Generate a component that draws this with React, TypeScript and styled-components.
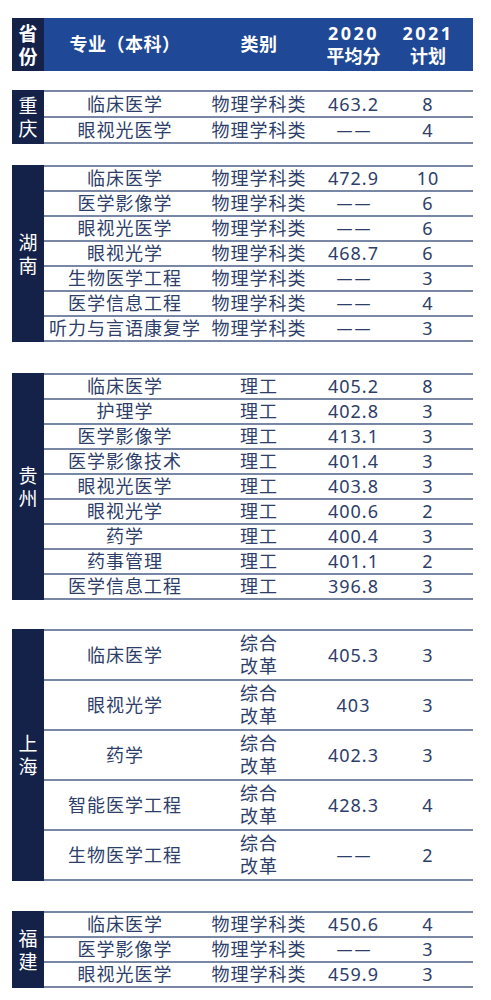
import React from "react";
import styled, { createGlobalStyle } from "styled-components";

const GlobalStyle = createGlobalStyle`
  html, body {
    margin: 0;
    padding: 0;
    background: #ffffff;
  }
  body {
    font-family: "Noto Sans", "Noto Sans CJK SC", sans-serif;
  }
`;

const NAVY = "#14224a";
const BLUE = "#1f4996";
const TEXT = "#2d3e69";
const LINE = "#7887a6";

const Page = styled.div`
  width: 461px;
  padding: 18px 18px 0 12px;
  display: flex;
  flex-direction: column;
`;

const Header = styled.div`
  display: flex;
  height: 53px;
  background: ${BLUE};
  color: #ffffff;
  font-weight: 700;
`;

const ProvinceCell = styled.div<{ $header?: boolean }>`
  width: 32px;
  flex: 0 0 32px;
  background: ${NAVY};
  color: #ffffff;
  display: flex;
  align-items: center;
  justify-content: center;
  font-family: "Noto Sans CJK SC", sans-serif;
  font-size: 19px;
  font-weight: ${(p) => (p.$header ? 700 : 400)};
`;

const ProvText = styled.span`
  writing-mode: vertical-rl;
  text-orientation: upright;
  letter-spacing: 4px;
  margin-bottom: -4px;
  line-height: 19px;
`;

const Cols = styled.div`
  flex: 1;
  display: grid;
  grid-template-columns: 162px 106px 83px 1fr;
`;

const HeadCell = styled.div<{ $pr?: number }>`
  display: flex;
  align-items: center;
  justify-content: center;
  padding-right: ${(p) => p.$pr ?? 0}px;
  font-family: "Noto Sans", "Noto Sans CJK SC", sans-serif;
  font-size: 18px;
  line-height: 21px;
  letter-spacing: 0.5px;
  text-align: center;
`;

const HeadStack = styled.div`
  text-align: center;
  line-height: 23px;
  letter-spacing: 0;
  margin-top: 1px;
  &::first-line {
    letter-spacing: 2.5px;
  }
`;

const Section = styled.section<{ $mt: number }>`
  display: flex;
  margin-top: ${(p) => p.$mt}px;
`;

const Rows = styled.div`
  flex: 1;
  display: flex;
  flex-direction: column;
  border-top: 2px solid ${LINE};
`;

const Row = styled.div<{ $h: number }>`
  box-sizing: border-box;
  height: ${(p) => p.$h}px;
  border-bottom: 2px solid ${LINE};
  display: grid;
  grid-template-columns: 162px 106px 83px 1fr;
  color: ${TEXT};
  font-size: 18px;
`;

const Cell = styled.div<{ $pr?: number }>`
  display: flex;
  flex-direction: column;
  align-items: center;
  justify-content: center;
  padding-right: ${(p) => p.$pr ?? 0}px;
  letter-spacing: 1px;
  white-space: nowrap;
  line-height: 23px;
`;

const Dash = styled.span`
  font-family: "Noto Sans", sans-serif;
  font-size: 16px;
  letter-spacing: 2px;
  margin-right: -2px;
`;

type R = [string, string, string | null, string];
type S = { prov: string; mt: number; h: number; rows: R[] };

const PHYS = "物理学科类";
const LG = "理工";
const ZH = "综合|改革";

const sections: S[] = [
  {
    prov: "重庆",
    mt: 19,
    h: 26,
    rows: [
      ["临床医学", PHYS, "463.2", "8"],
      ["眼视光医学", PHYS, null, "4"],
    ],
  },
  {
    prov: "湖南",
    mt: 21,
    h: 25,
    rows: [
      ["临床医学", PHYS, "472.9", "10"],
      ["医学影像学", PHYS, null, "6"],
      ["眼视光医学", PHYS, null, "6"],
      ["眼视光学", PHYS, "468.7", "6"],
      ["生物医学工程", PHYS, null, "3"],
      ["医学信息工程", PHYS, null, "4"],
      ["听力与言语康复学", PHYS, null, "3"],
    ],
  },
  {
    prov: "贵州",
    mt: 31,
    h: 25,
    rows: [
      ["临床医学", LG, "405.2", "8"],
      ["护理学", LG, "402.8", "3"],
      ["医学影像学", LG, "413.1", "3"],
      ["医学影像技术", LG, "401.4", "3"],
      ["眼视光医学", LG, "403.8", "3"],
      ["眼视光学", LG, "400.6", "2"],
      ["药学", LG, "400.4", "3"],
      ["药事管理", LG, "401.1", "2"],
      ["医学信息工程", LG, "396.8", "3"],
    ],
  },
  {
    prov: "上海",
    mt: 29,
    h: 50,
    rows: [
      ["临床医学", ZH, "405.3", "3"],
      ["眼视光学", ZH, "403", "3"],
      ["药学", ZH, "402.3", "3"],
      ["智能医学工程", ZH, "428.3", "4"],
      ["生物医学工程", ZH, null, "2"],
    ],
  },
  {
    prov: "福建",
    mt: 30,
    h: 25,
    rows: [
      ["临床医学", PHYS, "450.6", "4"],
      ["医学影像学", PHYS, null, "3"],
      ["眼视光医学", PHYS, "459.9", "3"],
    ],
  },
];

const Stack: React.FC<{ text: string }> = ({ text }) => (
  <>
    {text.split("|").map((t) => (
      <span key={t}>{t}</span>
    ))}
  </>
);

export default function App() {
  return (
    <>
      <GlobalStyle />
      <Page>
        <Header>
          <ProvinceCell $header>
            <ProvText>省份</ProvText>
          </ProvinceCell>
          <Cols>
            <HeadCell>专业（本科）</HeadCell>
            <HeadCell>类别</HeadCell>
            <HeadCell>
              <HeadStack>
                2020
                <br />
                平均分
              </HeadStack>
            </HeadCell>
            <HeadCell $pr={12}>
              <HeadStack>
                2021
                <br />
                计划
              </HeadStack>
            </HeadCell>
          </Cols>
        </Header>
        {sections.map((s) => (
          <Section key={s.prov} $mt={s.mt}>
            <ProvinceCell>
              <ProvText>{s.prov}</ProvText>
            </ProvinceCell>
            <Rows>
              {s.rows.map((r, i) => (
                <Row key={i} $h={s.h}>
                  <Cell>{r[0]}</Cell>
                  <Cell>
                    <Stack text={r[1]} />
                  </Cell>
                  <Cell>{r[2] ? r[2] : <Dash>——</Dash>}</Cell>
                  <Cell $pr={12}>{r[3]}</Cell>
                </Row>
              ))}
            </Rows>
          </Section>
        ))}
      </Page>
    </>
  );
}
